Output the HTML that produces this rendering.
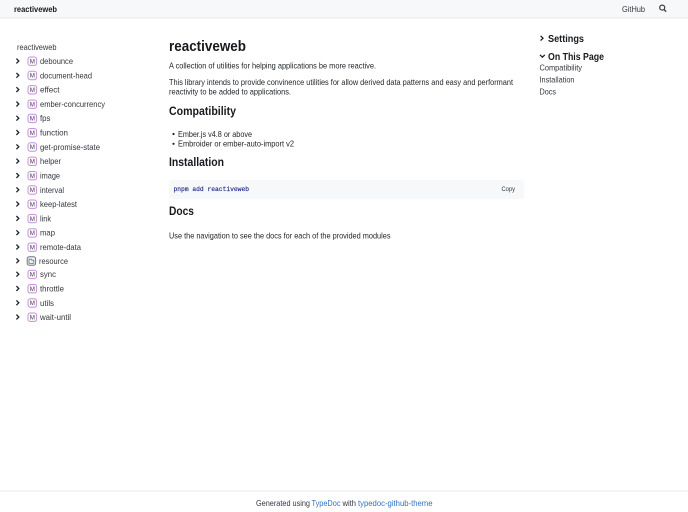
<!DOCTYPE html>
<html lang="en">
<head>
<meta charset="utf-8">
<title>reactiveweb</title>
<style>
html,body{margin:0;padding:0;width:688px;height:512px;overflow:hidden;background:#fff}
svg{display:block;position:absolute;left:0;top:0;filter:blur(.2px)}
text{font-family:"Liberation Sans",sans-serif;fill:#1f2328;font-size:8.7px}
.b{font-weight:bold;fill:#16191d}
.n{fill:#33383e}
.m{font-size:6.2px;fill:#3f444a;text-anchor:middle}
.ic{fill:#fdf8fe;stroke:#c98fdc;stroke-width:1}
.ch{fill:none;stroke:#1f2328;stroke-width:1.3}
.l{fill:#2f73c4}
</style>
</head>
<body>
<svg width="688" height="512" viewBox="0 0 688 512" xmlns="http://www.w3.org/2000/svg">
<defs>
<g id="mi"><path class="ch" d="M16.4 -2.4 L18.8 0 L16.4 2.4"/><rect class="ic" x="28" y="-4" width="8.6" height="8.4" rx="2.2"/></g>
</defs>
<rect x="0" y="0" width="688" height="18" fill="#f6f8fa"/>
<rect x="0" y="17.5" width="688" height="1" fill="#e6e9ec"/>
<text class="b" x="14" y="11.8" lengthAdjust="spacingAndGlyphs" textLength="43">reactiveweb</text>
<text class="n" x="622" y="11.8" lengthAdjust="spacingAndGlyphs" textLength="23">GitHub</text>
<g fill="none" stroke="#3a4047"><circle cx="662.2" cy="7.6" r="2.5" stroke-width="1.2"/><path d="M664 9.6 L666.2 11.6" stroke-width="1.4"/></g>

<text class="n" x="17" y="50" lengthAdjust="spacingAndGlyphs" textLength="39.5">reactiveweb</text>

<use href="#mi" y="61"/><text class="m" x="32.3" y="63.4">M</text><text class="n" x="40" y="64" lengthAdjust="spacingAndGlyphs" textLength="33">debounce</text>
<use href="#mi" y="75.3"/><text class="m" x="32.3" y="77.7">M</text><text class="n" x="40" y="78.3" lengthAdjust="spacingAndGlyphs" textLength="52">document-head</text>
<use href="#mi" y="89.6"/><text class="m" x="32.3" y="92">M</text><text class="n" x="40" y="92.6" lengthAdjust="spacingAndGlyphs" textLength="19.5">effect</text>
<use href="#mi" y="104"/><text class="m" x="32.3" y="106.4">M</text><text class="n" x="40" y="107" lengthAdjust="spacingAndGlyphs" textLength="65">ember-concurrency</text>
<use href="#mi" y="118.2"/><text class="m" x="32.3" y="120.6">M</text><text class="n" x="40" y="121.2" lengthAdjust="spacingAndGlyphs" textLength="10.5">fps</text>
<use href="#mi" y="132.5"/><text class="m" x="32.3" y="134.9">M</text><text class="n" x="40" y="135.5" lengthAdjust="spacingAndGlyphs" textLength="28">function</text>
<use href="#mi" y="146.8"/><text class="m" x="32.3" y="149.2">M</text><text class="n" x="40" y="149.8" lengthAdjust="spacingAndGlyphs" textLength="60">get-promise-state</text>
<use href="#mi" y="161.1"/><text class="m" x="32.3" y="163.5">M</text><text class="n" x="40" y="164.1" lengthAdjust="spacingAndGlyphs" textLength="21">helper</text>
<use href="#mi" y="175.5"/><text class="m" x="32.3" y="177.9">M</text><text class="n" x="40" y="178.5" lengthAdjust="spacingAndGlyphs" textLength="20">image</text>
<use href="#mi" y="189.8"/><text class="m" x="32.3" y="192.2">M</text><text class="n" x="40" y="192.8" lengthAdjust="spacingAndGlyphs" textLength="24">interval</text>
<use href="#mi" y="204"/><text class="m" x="32.3" y="206.4">M</text><text class="n" x="40" y="207" lengthAdjust="spacingAndGlyphs" textLength="37">keep-latest</text>
<use href="#mi" y="218.4"/><text class="m" x="32.3" y="220.8">M</text><text class="n" x="40" y="221.4" lengthAdjust="spacingAndGlyphs" textLength="11">link</text>
<use href="#mi" y="232.7"/><text class="m" x="32.3" y="235.1">M</text><text class="n" x="40" y="235.7" lengthAdjust="spacingAndGlyphs" textLength="15">map</text>
<use href="#mi" y="247"/><text class="m" x="32.3" y="249.4">M</text><text class="n" x="40" y="250" lengthAdjust="spacingAndGlyphs" textLength="41">remote-data</text>

<path class="ch" d="M16.4 258.4 L18.8 260.8 L16.4 263.2"/>
<rect x="27.2" y="256.8" width="8.4" height="8.4" rx="2" fill="#f0f1f2" stroke="#6e7781" stroke-width="1"/>
<path d="M29 263.4 V259.2 H31.2 L32 260.2 H33.8 V263.4 Z" fill="none" stroke="#6e7781" stroke-width=".8"/>
<text class="n" x="39" y="263.8" lengthAdjust="spacingAndGlyphs" textLength="29">resource</text>

<use href="#mi" y="274.2"/><text class="m" x="32.3" y="276.6">M</text><text class="n" x="40" y="277.2" lengthAdjust="spacingAndGlyphs" textLength="16">sync</text>
<use href="#mi" y="288.5"/><text class="m" x="32.3" y="290.9">M</text><text class="n" x="40" y="291.5" lengthAdjust="spacingAndGlyphs" textLength="24">throttle</text>
<use href="#mi" y="302.8"/><text class="m" x="32.3" y="305.2">M</text><text class="n" x="40" y="305.8" lengthAdjust="spacingAndGlyphs" textLength="14">utils</text>
<use href="#mi" y="317"/><text class="m" x="32.3" y="319.4">M</text><text class="n" x="40" y="320" lengthAdjust="spacingAndGlyphs" textLength="31">wait-until</text>

<text class="b" x="169" y="50.8" style="font-size:14.8px" lengthAdjust="spacingAndGlyphs" textLength="77">reactiveweb</text>
<text x="169" y="68.5" lengthAdjust="spacingAndGlyphs" textLength="207">A collection of utilities for helping applications be more reactive.</text>
<text x="169" y="85" lengthAdjust="spacingAndGlyphs" textLength="344">This library intends to provide convinence utilities for allow derived data patterns and easy and performant</text>
<text x="169" y="94.5" lengthAdjust="spacingAndGlyphs" textLength="122">reactivity to be added to applications.</text>
<text class="b" x="169" y="114.8" style="font-size:11.8px" lengthAdjust="spacingAndGlyphs" textLength="67">Compatibility</text>
<circle cx="173.5" cy="134" r="1.1" fill="#1f2328"/>
<text x="178" y="136.8" lengthAdjust="spacingAndGlyphs" textLength="74">Ember.js v4.8 or above</text>
<circle cx="173.5" cy="143.8" r="1.1" fill="#1f2328"/>
<text x="178" y="146.6" lengthAdjust="spacingAndGlyphs" textLength="116">Embroider or ember-auto-import v2</text>
<text class="b" x="169" y="165.8" style="font-size:11.8px" lengthAdjust="spacingAndGlyphs" textLength="55">Installation</text>

<rect x="169" y="180" width="355" height="19" rx="3" fill="#f6f8fa"/>
<text x="173.5" y="191.2" style="font-family:'Liberation Mono',monospace;font-size:6.6px;fill:#1c2a86;stroke:#1c2a86;stroke-width:.15" lengthAdjust="spacingAndGlyphs" textLength="75.5">pnpm add reactiveweb</text>
<text class="n" x="501.5" y="191.2" style="font-size:6.8px" lengthAdjust="spacingAndGlyphs" textLength="13.5">Copy</text>

<text class="b" x="169" y="215.2" style="font-size:11.8px" lengthAdjust="spacingAndGlyphs" textLength="25">Docs</text>
<text x="169" y="238.5" lengthAdjust="spacingAndGlyphs" textLength="221.5">Use the navigation to see the docs for each of the provided modules</text>

<path class="ch" d="M540.6 35.8 L543 38.2 L540.6 40.6"/>
<text class="b" x="548" y="41.8" style="font-size:10px" lengthAdjust="spacingAndGlyphs" textLength="36">Settings</text>
<path class="ch" d="M540 54.8 L542.4 57.2 L544.8 54.8"/>
<text class="b" x="548" y="59.8" style="font-size:10px" lengthAdjust="spacingAndGlyphs" textLength="56">On This Page</text>
<text class="n" x="539.5" y="70.5" lengthAdjust="spacingAndGlyphs" textLength="42.5">Compatibility</text>
<text class="n" x="539.5" y="82.5" lengthAdjust="spacingAndGlyphs" textLength="35">Installation</text>
<text class="n" x="539.5" y="94.5" lengthAdjust="spacingAndGlyphs" textLength="16.5">Docs</text>

<rect x="0" y="490.5" width="688" height="1" fill="#e6e9ec"/>
<text class="n" x="256" y="506" lengthAdjust="spacingAndGlyphs" textLength="54">Generated using</text>
<text class="l" x="311.5" y="506" lengthAdjust="spacingAndGlyphs" textLength="29">TypeDoc</text>
<text class="n" x="342.5" y="506" lengthAdjust="spacingAndGlyphs" textLength="13.5">with</text>
<text class="l" x="358" y="506" lengthAdjust="spacingAndGlyphs" textLength="74.5">typedoc-github-theme</text>
</svg>
</body>
</html>
